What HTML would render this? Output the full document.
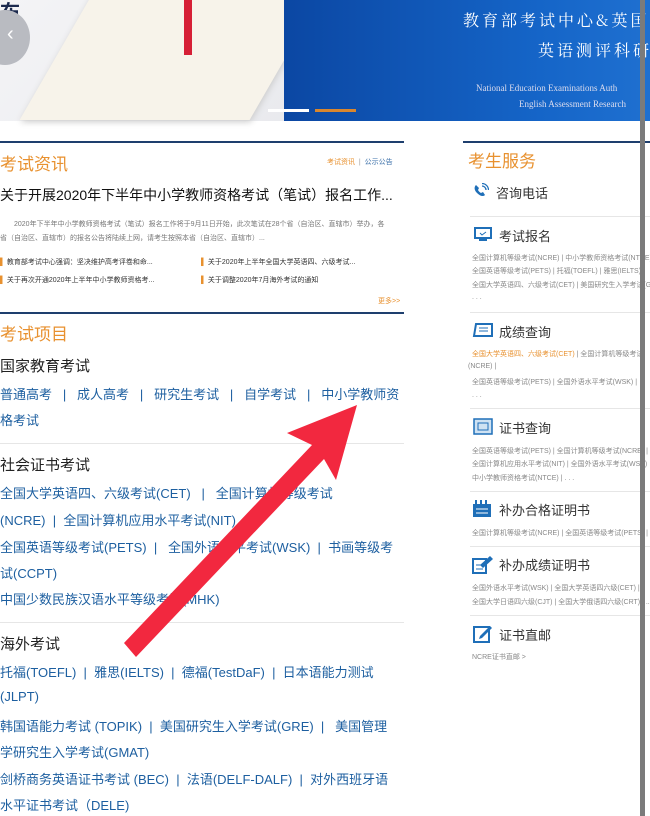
<!DOCTYPE html>
<html><head><meta charset="utf-8"><style>
*{margin:0;padding:0;box-sizing:border-box}
body{width:650px;height:816px;overflow:hidden;background:#fff;position:relative;font-family:"Liberation Sans","Noto Sans CJK SC",sans-serif}
.a{position:absolute;white-space:nowrap}
.l{color:#1d5fa0;font-size:13px}
.h{color:#222;font-size:15px}
.o{color:#e8912f}
.line{position:absolute;height:2px;background:#1e3f6e}
.sep{position:absolute;height:1px;background:#e6e6e6}
.sb{position:absolute;font-size:13px;color:#333}
.sv{position:absolute;font-size:7px;color:#888;white-space:nowrap}
</style></head><body>
<!-- banner -->
<div class="a" style="left:0;top:0;width:284px;height:121px;background:linear-gradient(135deg,#f4f4f6,#e9eaee)"></div>
<div class="a" style="left:60px;top:-20px;width:230px;height:140px;background:#f7f3ea;transform:skewX(-30deg);box-shadow:2px 2px 6px #ccc"></div>
<div class="a" style="left:184px;top:0;width:8px;height:55px;background:#d61f36"></div>
<div class="a" style="left:0;top:-4px;font-size:20px;font-weight:bold;color:#1c2a4e">布</div>
<div class="a" style="left:-20px;top:10px;width:50px;height:55px;border-radius:50%;background:#b9bbc1"></div>
<div class="a" style="left:7px;top:23px;font-size:20px;color:#fff">‹</div>
<div class="a" style="left:284px;top:0;width:366px;height:121px;background:linear-gradient(90deg,#0b47a3,#1565c8 70%,#1f70d0)"></div>
<div class="a" style="left:463px;top:8px;font-size:16px;color:#fff;font-family:'Noto Serif CJK SC',serif;letter-spacing:3px">教育部考试中心&amp;英国</div>
<div class="a" style="left:538px;top:38px;font-size:16px;color:#fff;font-family:'Noto Serif CJK SC',serif;letter-spacing:3px">英语测评科研</div>
<div class="a" style="left:476px;top:83px;font-size:9px;color:#dde;font-family:'Liberation Serif',serif">National Education Examinations Auth</div>
<div class="a" style="left:519px;top:99px;font-size:9px;color:#dde;font-family:'Liberation Serif',serif">English Assessment Research</div>
<div class="a" style="left:268px;top:109px;width:41px;height:3px;background:#fff"></div>
<div class="a" style="left:315px;top:109px;width:41px;height:3px;background:#d9862e"></div>

<!-- left -->
<div class="line" style="left:0;top:141px;width:404px"></div>
<div class="a o" style="left:0;top:150px;font-size:17px">考试资讯</div>
<div class="a" style="left:327px;top:157px;font-size:7px;color:#999"><span class="o">考试资讯</span> &nbsp;|&nbsp; <span style="color:#3a6fa8">公示公告</span></div>
<div class="a" style="left:0;top:185px;font-size:14px;color:#111">关于开展2020年下半年中小学教师资格考试（笔试）报名工作...</div>
<div class="a" style="left:14px;top:219px;font-size:7px;color:#777">2020年下半年中小学教师资格考试（笔试）报名工作将于9月11日开始，此次笔试在28个省（自治区、直辖市）举办，各</div>
<div class="a" style="left:0;top:233px;font-size:7px;color:#777">省（自治区、直辖市）的报名公告将陆续上网，请考生按照本省（自治区、直辖市）...</div>
<div class="a" style="left:0;top:257px;font-size:7px;color:#333"><span style="color:#e8912f">▌</span> 教育部考试中心强调：坚决维护高考评卷和命...</div>
<div class="a" style="left:201px;top:257px;font-size:7px;color:#333"><span style="color:#e8912f">▌</span> 关于2020年上半年全国大学英语四、六级考试...</div>
<div class="a" style="left:0;top:275px;font-size:7px;color:#333"><span style="color:#e8912f">▌</span> 关于再次开通2020年上半年中小学教师资格考...</div>
<div class="a" style="left:201px;top:275px;font-size:7px;color:#333"><span style="color:#e8912f">▌</span> 关于调整2020年7月海外考试的通知</div>
<div class="a o" style="left:378px;top:296px;font-size:7px">更多&gt;&gt;</div>
<div class="line" style="left:0;top:312px;width:404px"></div>
<div class="a o" style="left:0;top:320px;font-size:17px">考试项目</div>
<div class="a h" style="left:0;top:355px">国家教育考试</div>
<div class="a l" style="left:0;top:384px">普通高考 &nbsp; | &nbsp; 成人高考 &nbsp; | &nbsp; 研究生考试 &nbsp; | &nbsp; 自学考试 &nbsp; | &nbsp; 中小学教师资</div>
<div class="a l" style="left:0;top:410px">格考试</div>
<div class="sep" style="left:0;top:443px;width:404px"></div>
<div class="a h" style="left:0;top:454px">社会证书考试</div>
<div class="a l" style="left:0;top:483px">全国大学英语四、六级考试(CET) &nbsp; | &nbsp; 全国计算机等级考试</div>
<div class="a l" style="left:0;top:510px">(NCRE) &nbsp;| &nbsp;全国计算机应用水平考试(NIT)</div>
<div class="a l" style="left:0;top:537px">全国英语等级考试(PETS) &nbsp;| &nbsp; 全国外语水平考试(WSK) &nbsp;| &nbsp;书画等级考</div>
<div class="a l" style="left:0;top:563px">试(CCPT)</div>
<div class="a l" style="left:0;top:589px">中国少数民族汉语水平等级考试(MHK)</div>
<div class="sep" style="left:0;top:622px;width:404px"></div>
<div class="a h" style="left:0;top:633px">海外考试</div>
<div class="a l" style="left:0;top:662px">托福(TOEFL) &nbsp;| &nbsp;雅思(IELTS) &nbsp;| &nbsp;德福(TestDaF) &nbsp;| &nbsp;日本语能力测试</div>
<div class="a l" style="left:0;top:689px">(JLPT)</div>
<div class="a l" style="left:0;top:716px">韩国语能力考试 (TOPIK) &nbsp;| &nbsp;美国研究生入学考试(GRE) &nbsp;| &nbsp; 美国管理</div>
<div class="a l" style="left:0;top:742px">学研究生入学考试(GMAT)</div>
<div class="a l" style="left:0;top:769px">剑桥商务英语证书考试 (BEC) &nbsp;| &nbsp;法语(DELF-DALF) &nbsp;| &nbsp;对外西班牙语</div>
<div class="a l" style="left:0;top:795px">水平证书考试（DELE)</div>

<!-- right -->
<div class="line" style="left:463px;top:141px;width:187px"></div>
<div class="a o" style="left:468px;top:147px;font-size:17px">考生服务</div>
<svg class="a" style="left:473px;top:183px" width="16" height="16" viewBox="0 0 16 16"><path d="M3 2c-2 2-2 5 1 8s6 4 8 2l-2-3-2 1c-1-.5-2.5-2-3-3l1-2z" fill="#1f6fb8"/><path d="M9 3a4 4 0 0 1 4 4M9 0.5a6.5 6.5 0 0 1 6.5 6.5" stroke="#1f6fb8" stroke-width="1.3" fill="none"/></svg>
<div class="sb" style="left:496px;top:183px">咨询电话</div>
<div class="sep" style="left:470px;top:216px;width:180px"></div>
<svg class="a" style="left:474px;top:227px" width="18" height="15"><rect x="1" y="1" width="16" height="10" fill="#fff" stroke="#1f6fb8" stroke-width="2"/><rect x="5" y="12" width="8" height="2" fill="#1f6fb8"/><path d="M6 6l2 2 4-3" stroke="#1f6fb8" fill="none"/></svg>
<div class="sb" style="left:499px;top:226px">考试报名</div>
<div class="sv" style="left:472px;top:253px">全国计算机等级考试(NCRE) | 中小学教师资格考试(NTCE)</div>
<div class="sv" style="left:472px;top:266px">全国英语等级考试(PETS) | 托福(TOEFL) | 雅思(IELTS)</div>
<div class="sv" style="left:472px;top:280px">全国大学英语四、六级考试(CET) | 美国研究生入学考试(GRE)</div>
<div class="sv" style="left:472px;top:294px">. . .</div>
<div class="sep" style="left:470px;top:312px;width:180px"></div>
<svg class="a" style="left:472px;top:322px" width="22" height="16"><path d="M4 2h16v12H2z" fill="#fff" stroke="#1f6fb8" stroke-width="2"/><path d="M7 6h9M7 9h9" stroke="#1f6fb8"/></svg>
<div class="sb" style="left:499px;top:322px">成绩查询</div>
<div class="sv" style="left:472px;top:349px"><span class="o">全国大学英语四、六级考试(CET)</span> | 全国计算机等级考试</div>
<div class="sv" style="left:468px;top:363px">(NCRE) |</div>
<div class="sv" style="left:472px;top:377px">全国英语等级考试(PETS) | 全国外语水平考试(WSK) |</div>
<div class="sv" style="left:472px;top:392px">. . .</div>
<div class="sep" style="left:470px;top:408px;width:180px"></div>
<svg class="a" style="left:473px;top:418px" width="20" height="17"><rect x="1" y="1" width="18" height="15" fill="#cfe2f3" stroke="#1f6fb8" stroke-width="1.5"/><rect x="5" y="5" width="10" height="7" fill="none" stroke="#1f6fb8"/></svg>
<div class="sb" style="left:499px;top:418px">证书查询</div>
<div class="sv" style="left:472px;top:446px">全国英语等级考试(PETS) | 全国计算机等级考试(NCRE) |</div>
<div class="sv" style="left:472px;top:459px">全国计算机应用水平考试(NIT) | 全国外语水平考试(WSK)</div>
<div class="sv" style="left:472px;top:473px">中小学教师资格考试(NTCE) | . . .</div>
<div class="sep" style="left:470px;top:491px;width:180px"></div>
<svg class="a" style="left:472px;top:500px" width="20" height="18"><rect x="1" y="4" width="18" height="13" fill="#1f6fb8"/><path d="M4 0v6M9 0v6M14 0v6" stroke="#1f6fb8" stroke-width="2"/><path d="M4 9h12M4 13h12" stroke="#fff"/></svg>
<div class="sb" style="left:499px;top:500px">补办合格证明书</div>
<div class="sv" style="left:472px;top:528px">全国计算机等级考试(NCRE) | 全国英语等级考试(PETS) |</div>
<div class="sep" style="left:470px;top:546px;width:180px"></div>
<svg class="a" style="left:472px;top:555px" width="22" height="19"><rect x="1" y="4" width="13" height="14" fill="#fff" stroke="#1f6fb8" stroke-width="2"/><path d="M8 10l10-9 3 3-10 9z" fill="#1f6fb8"/><path d="M4 10h5M4 14h7" stroke="#1f6fb8"/></svg>
<div class="sb" style="left:499px;top:555px">补办成绩证明书</div>
<div class="sv" style="left:472px;top:583px">全国外语水平考试(WSK) | 全国大学英语四六级(CET) |</div>
<div class="sv" style="left:472px;top:597px">全国大学日语四六级(CJT) | 全国大学俄语四六级(CRT) | ..</div>
<div class="sep" style="left:470px;top:615px;width:180px"></div>
<svg class="a" style="left:473px;top:624px" width="20" height="19"><rect x="1" y="3" width="15" height="15" fill="#fff" stroke="#1f6fb8" stroke-width="2"/><path d="M7 12l10-10 2 2-10 10-3 1z" fill="#1f6fb8"/></svg>
<div class="sb" style="left:499px;top:625px">证书直邮</div>
<div class="sv" style="left:472px;top:652px">NCRE证书直邮 &gt;</div>

<!-- scrollbar line -->
<div class="a" style="left:640px;top:0;width:5px;height:816px;background:#7b7b7b"></div>

<!-- arrow -->
<svg class="a" style="left:0;top:0" width="650" height="816"><path d="M124 643 L312 445 L287 433 L357 405 L336 480 L324 459 L136 657 Z" fill="#f2283f"/></svg>
</body></html>
